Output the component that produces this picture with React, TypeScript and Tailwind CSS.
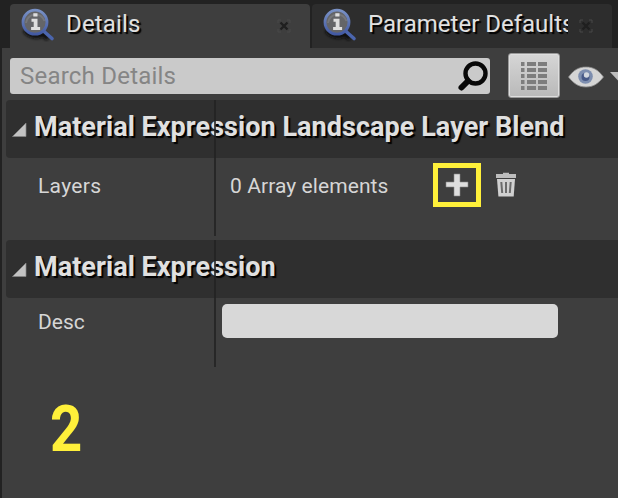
import React from "react";

function DetailsIcon({ id }: { id: string }) {
  return (
    <svg className="h-[34px] w-[34px] shrink-0" viewBox="0 0 34 34">
      <defs>
        <linearGradient id={id} x1="0" y1="0" x2="0" y2="1">
          <stop offset="0" stopColor="#7991c5" />
          <stop offset="1" stopColor="#4259a2" />
        </linearGradient>
        <filter id={`${id}-soft`} x="-30%" y="-30%" width="160%" height="160%">
          <feGaussianBlur stdDeviation="1.4" />
        </filter>
      </defs>
      <path d="M4 22c3 6 13 8 18 4l5 5" fill="none" stroke="#111" strokeWidth="5" filter={`url(#${id}-soft)`} />
      <path d="M22.5 23L31 30.5" stroke="#4b65ad" strokeWidth="3.6" strokeLinecap="round" />
      <circle cx="14" cy="14.2" r="12" fill="#646568" stroke={`url(#${id})`} strokeWidth="2.8" />
      <path d="M5 15a9.5 9.5 0 0 1 18.5-2" fill="none" stroke="#87898d" strokeWidth="2" opacity=".5" />
      <path d="M12.3 5.2h4.2v3.4h-4.2zM10.5 10.8h6v8.2h2.6v3h-9v-3h2.6v-5.2h-2.2z" fill="#dedede" />
    </svg>
  );
}

function CloseIcon() {
  return (
    <svg className="h-[14px] w-[14px] shrink-0" viewBox="0 0 14 14">
      <path d="M1 4V1h3M10 1h3v3M13 10v3h-3M4 13H1v-3" fill="none" stroke="#484848" strokeWidth="1" />
      <path d="M3.5 3.5l7 7M10.5 3.5l-7 7" stroke="#1f1f1f" strokeWidth="2.4" />
    </svg>
  );
}

function SectionHeader({ title }: { title: string }) {
  return (
    <div className="flex h-[58px] rounded-l-[4px] bg-[#2f2f2f] pl-[6px]">
      <svg className="mt-[22px] h-[15px] w-[15px] shrink-0" viewBox="0 0 15 15">
        <path d="M.5 14.5L14 1v13.5z" fill="#c2c2c2" stroke="#858585" strokeWidth=".7" />
      </svg>
      <h2 className="ml-[7px] mt-[11px] whitespace-nowrap text-[27px] font-bold leading-[32px] tracking-[0.05px] text-[#e0e0e0] [text-shadow:2px_2px_1px_#000]">
        {title}
      </h2>
    </div>
  );
}

function Divider() {
  return <div className="absolute bottom-0 left-[208px] top-0 w-[2px] bg-[#222]/80" />;
}

export default function App() {
  return (
    <div className="h-[498px] w-[618px] overflow-hidden bg-[#222] pl-[2px] pt-[4px] font-[Roboto,sans-serif]">
      <div className="flex h-[44px] gap-[2px] pl-[8px]">
        <div className="flex w-[300px] rounded-t-[4px] bg-[#3e3e3e] pl-[11px] pt-[4px]">
          <DetailsIcon id="details" />
          <span className="ml-[11px] mt-[2px] w-[205px] text-[24px] leading-[28px] tracking-[0.15px] text-[#e1e1e1] [text-shadow:2px_2px_1px_#000]">Details</span>
          <div className="ml-[6px] mt-[11px]"><CloseIcon /></div>
        </div>
        <div className="flex w-[300px] rounded-t-[4px] bg-[#2d2d2d] pl-[11px] pt-[4px]">
          <DetailsIcon id="parameters" />
          <span className="ml-[11px] mt-[2px] w-[200px] overflow-hidden whitespace-nowrap text-[24px] leading-[28px] text-[#e1e1e1] [text-shadow:2px_2px_1px_#000]">Parameter Defaults</span>
          <div className="ml-[11px] mt-[11px]"><CloseIcon /></div>
        </div>
      </div>
      <div className="h-[450px] bg-[#3e3e3e]">
        <div className="flex h-[52px] pl-[8px]">
          <div className="mt-[10px] flex h-[36px] w-[480px] justify-between rounded-[3px] bg-[#cacaca] pl-[10px]">
            <span className="mt-[4px] text-[24px] leading-[28px] tracking-[0.22px] text-[#858585]">Search Details</span>
            <svg className="mr-[1px] mt-[2px] h-[32px] w-[32px]" viewBox="0 0 32 32">
              <path d="M11 21l-6.5 6.5" stroke="#080808" strokeWidth="6" strokeLinecap="round" />
              <circle cx="18.5" cy="13.5" r="10" fill="none" stroke="#080808" strokeWidth="4.4" />
            </svg>
          </div>
          <button className="ml-[18px] mt-[5px] flex h-[45px] w-[52px] items-center justify-center rounded-[3px] border border-[#999] bg-linear-to-b from-[#d6d6d6] to-[#b9b9b9] shadow-[inset_0_0_0_1px_#dedede]">
            <svg className="h-[30px] w-[28px]" viewBox="0 0 28 30">
              {[1, 7, 13, 19, 25].map((y) => (
                <path key={y} d={`M1 ${y}h3.5v4H1zM7 ${y}h9v4H7zM18 ${y}h9v4h-9z`} fill="#7d7d7d" />
              ))}
            </svg>
          </button>
          <svg className="ml-[8px] mt-[17px] h-[24px] w-[36px] shrink-0" viewBox="0 0 36 24">
            <path d="M.5 12C6 4.5 11 2 18 2s12 2.5 17.5 10C30 19 25 22 18 22S6 19 .5 12z" fill="#d5d5d5" stroke="#888" strokeWidth=".8" />
            <circle cx="17.5" cy="11.5" r="7.3" fill="#7d8eaf" />
            <circle cx="17.5" cy="12" r="4" fill="#475987" />
            <circle cx="18.5" cy="10" r="2.7" fill="#d3d8df" />
          </svg>
          <svg className="ml-[5px] mt-[23px] h-[11px] w-[9px] shrink-0" viewBox="0 0 9 11">
            <path d="M1 1h17L9.5 10z" fill="#bdbdbd" />
          </svg>
        </div>
        <section className="relative ml-[4px] h-[136px]">
          <SectionHeader title="Material Expression Landscape Layer Blend" />
          <div className="flex text-[21px] leading-[24px] text-[#d6d6d6]">
            <span className="ml-[32px] mt-[16px] w-[192px] tracking-[0.3px]">Layers</span>
            <span className="mt-[16px] w-[203px] tracking-[0.08px]">0 Array elements</span>
            <button className="mt-[5px] flex h-[44px] w-[48px] items-center justify-center border-[5px] border-[#fff03a]">
              <svg className="h-[24px] w-[24px]" viewBox="0 0 24 24">
                <path d="M9 1h6v8h8v5h-8v9H9v-9H1V9h8z" fill="#dedede" stroke="#888" strokeWidth=".6" />
              </svg>
            </button>
            <svg className="ml-[14px] mt-[14px] h-[26px] w-[22px]" viewBox="0 0 22 26">
              <path d="M1 2h7V.8h6V2h7v4H1z" fill="#bdbdbd" />
              <path d="M2 7h18l-1.3 17.5H3.4z" fill="#d0d0d0" />
              <path d="M6.3 10l.9 11M11 10v11M15.7 10l-.9 11" stroke="#6b6b6b" strokeWidth="2" />
            </svg>
          </div>
          <Divider />
        </section>
        <section className="relative ml-[4px] mt-[4px] h-[127px]">
          <SectionHeader title="Material Expression" />
          <div className="flex text-[21px] leading-[24px] text-[#d6d6d6]">
            <span className="ml-[32px] mt-[12px] w-[184px]">Desc</span>
            <div className="mt-[6px] h-[34px] w-[336px] rounded-[5px] bg-[#d8d8d8]" />
          </div>
          <Divider />
        </section>
        <div className="ml-[48px] mt-[25px] w-[40px] origin-left scale-x-[.88] text-[64px] font-bold leading-[75px] text-[#fff03a]">2</div>
      </div>
    </div>
  );
}
